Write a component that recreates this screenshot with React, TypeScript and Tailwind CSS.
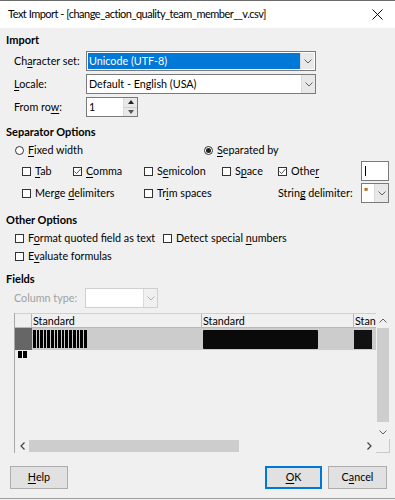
import React from "react";

const font = { fontFamily: 'Lato, "Noto Sans", "Liberation Sans", sans-serif' };

const Chevron = ({ up = false }: { up?: boolean }) => (
  <svg width="8" height="5" viewBox="0 0 8 5" className={up ? "rotate-180" : ""}>
    <path d="M0.5 0.5 L4 4 L7.5 0.5" fill="none" stroke="#606060" strokeWidth="1" />
  </svg>
);

const Side = ({ left = false }: { left?: boolean }) => (
  <svg width="5" height="8" viewBox="0 0 5 8" className={left ? "rotate-180" : ""}>
    <path d="M0.5 0.5 L4 4 L0.5 7.5" fill="none" stroke="#404040" strokeWidth="1.2" />
  </svg>
);

const Check = ({ checked = false, label, className = "" }: { checked?: boolean; label: React.ReactNode; className?: string }) => (
  <div className={`flex items-center gap-[4px] whitespace-nowrap ${className}`}>
    <div className="w-[9px] h-[9px] shrink-0 border border-[#333] bg-white flex items-center justify-center">
      {checked && (
        <svg width="7" height="7" viewBox="0 0 7 7">
          <path d="M0.5 3.5 L2.6 5.6 L6.5 1" fill="none" stroke="#444" strokeWidth="0.9" />
        </svg>
      )}
    </div>
    <span>{label}</span>
  </div>
);

const Radio = ({ on = false, label, className = "" }: { on?: boolean; label: React.ReactNode; className?: string }) => (
  <div className={`flex items-center gap-[4px] whitespace-nowrap ${className}`}>
    <div className="w-[9px] h-[9px] shrink-0 rounded-full border border-[#333] bg-white flex items-center justify-center">
      {on && <div className="w-[5px] h-[5px] rounded-full bg-[#222]" />}
    </div>
    <span>{label}</span>
  </div>
);

const U = ({ children }: { children: React.ReactNode }) => (
  <span className="underline decoration-1 underline-offset-2">{children}</span>
);

const DropBtn = () => (
  <div className="w-[14px] h-full shrink-0 bg-[#e8e8e8] border-l border-[#dadada] flex items-center justify-center">
    <Chevron />
  </div>
);

export default function App() {
  return (
    <div className="w-[395px] h-[500px] bg-[#f0f0f0] text-[10.75px] text-black flex flex-col overflow-hidden whitespace-nowrap" style={font}>
      {/* title bar */}
      <div className="h-[28px] bg-white border-t border-[#6b6b6b] flex items-center justify-between pl-[8px] pr-[12px] shrink-0">
        <span className="text-[11px] tracking-[-0.5px]">Text Import - [change_action_quality_team_member__v.csv]</span>
        <svg width="11" height="11" viewBox="0 0 11 11">
          <path d="M0.5 0.5 L10.5 10.5 M10.5 0.5 L0.5 10.5" stroke="#111" strokeWidth="1" />
        </svg>
      </div>

      <div className="flex flex-col px-[6px]">
        <div className="mt-[4px] h-[16px] leading-[16px] font-bold text-[11px]">Import</div>

        <div className="mt-[3px] flex flex-col gap-[3px] pl-[8px]">
          <div className="flex items-center h-[20px]">
            <span className="w-[72px]">Ch<U>a</U>racter set:</span>
            <div className="w-[230px] h-[20px] border border-[#7a7a7a] bg-white flex p-px">
              <div className="flex-1 bg-[#0078d7] text-white pl-[1px] leading-[16px]">Unicode (UTF-8)</div>
              <DropBtn />
            </div>
          </div>
          <div className="flex items-center h-[20px]">
            <span className="w-[72px]"><U>L</U>ocale:</span>
            <div className="w-[230px] h-[20px] border border-[#7a7a7a] bg-white flex">
              <div className="flex-1 pl-[2px] leading-[18px]">Default - English (USA)</div>
              <DropBtn />
            </div>
          </div>
          <div className="flex items-center h-[20px]">
            <span className="w-[72px]">From ro<U>w</U>:</span>
            <div className="w-[52px] h-[20px] border border-[#7a7a7a] bg-white flex">
              <div className="flex-1 pl-[2px] leading-[18px]">1</div>
              <div className="w-[14px] flex flex-col border-l border-[#dadada]">
                <div className="flex-1 bg-[#e8e8e8] border-b border-[#cfcfcf] flex items-center justify-center">
                  <svg width="6" height="4" viewBox="0 0 6 4"><path d="M0 4 L3 0 L6 4 Z" fill="#222" /></svg>
                </div>
                <div className="flex-1 bg-[#e8e8e8] flex items-center justify-center">
                  <svg width="6" height="4" viewBox="0 0 6 4"><path d="M0 0 L3 4 L6 0 Z" fill="#555" /></svg>
                </div>
              </div>
            </div>
          </div>
        </div>

        <div className="mt-[7px] h-[16px] leading-[16px] font-bold text-[11px]">Separator Options</div>
        <div className="mt-[2px] h-[16px] flex items-center pl-[9px]">
          <Radio label={<><U>F</U>ixed width</>} className="w-[189px]" />
          <Radio on label={<><U>S</U>eparated by</>} />
        </div>
        <div className="mt-[3px] h-[20px] flex items-center pl-[16px]">
          <Check label={<><U>T</U>ab</>} className="w-[51px]" />
          <Check checked label={<><U>C</U>omma</>} className="w-[71px]" />
          <Check label={<>S<U>e</U>micolon</>} className="w-[78px]" />
          <Check label={<>S<U>p</U>ace</>} className="w-[56px]" />
          <Check checked label={<>Othe<U>r</U></>} className="w-[83px]" />
          <div className="w-[28px] h-[20px] border border-[#7a7a7a] bg-white flex items-center pl-[3px]">
            <div className="w-px h-[10px] bg-black" />
          </div>
        </div>
        <div className="mt-[2px] h-[20px] flex items-center pl-[16px]">
          <Check label={<>Merge <U>d</U>elimiters</>} className="w-[122px]" />
          <Check label={<>Tr<U>i</U>m spaces</>} className="w-[134px]" />
          <span className="w-[83px]">Strin<U>g</U> delimiter:</span>
          <div className="w-[28px] h-[20px] border border-[#7a7a7a] bg-white flex">
            <div className="flex-1 pl-[2px] leading-[16px]">"</div>
            <DropBtn />
          </div>
        </div>

        <div className="mt-[9px] h-[16px] leading-[16px] font-bold text-[11px]">Other Options</div>
        <div className="mt-[2px] h-[16px] flex items-center pl-[9px]">
          <Check label={<>F<U>o</U>rmat quoted field as text</>} className="w-[148px]" />
          <Check label={<>Detect special <U>n</U>umbers</>} />
        </div>
        <div className="mt-[2px] h-[16px] flex items-center pl-[9px]">
          <Check label={<>E<U>v</U>aluate formulas</>} />
        </div>

        <div className="mt-[7px] h-[16px] leading-[16px] font-bold text-[11px]">Fields</div>
        <div className="mt-[1px] h-[20px] flex items-center pl-[8px]">
          <span className="w-[71px] text-[#a0a0a0]">Column type:</span>
          <div className="w-[73px] h-[20px] border border-[#cfcfcf] bg-white flex">
            <div className="flex-1" />
            <div className="w-[14px] h-full bg-[#f0f0f0] border-l border-[#dadada] flex items-center justify-center">
              <svg width="8" height="5" viewBox="0 0 8 5"><path d="M0.5 0.5 L4 4 L7.5 0.5" fill="none" stroke="#b0b0b0" strokeWidth="1" /></svg>
            </div>
          </div>
        </div>

        {/* table */}
        <div className="mt-[5px] ml-[8px] w-[376px] h-[140px] border-l border-[#a8a8a8] flex flex-col">
          <div className="flex flex-1 min-h-0">
            <div className="flex-1 flex flex-col min-w-0">
              <div className="h-[15px] flex border-t border-[#d0d0d0] leading-[14px] shrink-0">
                <div className="w-[17px] border-r border-b border-[#b8b8b8]" />
                <div className="w-[170px] border-r border-b border-[#b8b8b8] pl-[1px]">Standard</div>
                <div className="w-[152px] border-r border-b border-[#b8b8b8] pl-[1px]">Standard</div>
                <div className="flex-1 border-b border-[#b8b8b8] pl-[1px] overflow-hidden">Stan</div>
              </div>
              <div className="h-[22px] flex bg-[#cccccc] shrink-0">
                <div className="w-[17px] bg-[#666]" />
                <div className="w-[170px] flex items-center pl-[1px] gap-[1px]">
                  {[3, 2, 3, 2, 3, 3, 2, 3, 2, 3, 3, 3, 2, 3, 3].map((w, i) => (
                    <div key={i} className="h-[18px] bg-black" style={{ width: w }} />
                  ))}
                </div>
                <div className="w-[152px] flex items-center pl-[1px]">
                  <div className="w-[115px] h-[19px] bg-[#0a0a0a] rounded-[1px]" />
                </div>
                <div className="flex-1 flex items-center">
                  <div className="w-[18px] h-[19px] bg-[#111]" />
                </div>
              </div>
              <div className="flex pl-[3px] pt-px gap-px">
                <div className="w-[4px] h-[7px] bg-black" />
                <div className="w-[4px] h-[7px] bg-black" />
              </div>
            </div>
            {/* vertical scrollbar */}
            <div className="w-[14px] flex flex-col">
              <div className="h-[15px] flex items-center justify-center"><Chevron up /></div>
              <div className="h-[94px] bg-[#cdcdcd] mx-[1px]" />
              <div className="flex-1 bg-[#f0f0f0]" />
              <div className="h-[14px] flex items-center justify-center"><Chevron /></div>
            </div>
          </div>
          {/* horizontal scrollbar */}
          <div className="h-[14px] flex items-center shrink-0">
            <div className="w-[14px] flex items-center justify-center"><Side left /></div>
            <div className="w-[210px] h-[12px] bg-[#cdcdcd]" />
            <div className="flex-1" />
            <div className="w-[14px] flex items-center justify-center"><Side /></div>
            <div className="w-[14px] h-[14px] border-b border-r border-[#c8c8c8]" />
          </div>
        </div>

        {/* buttons */}
        <div className="mt-[13px] flex items-center pl-[4px] pr-[2px]">
          <button className="w-[58px] h-[23px] bg-[#e1e1e1] border border-[#adadad] leading-none"><U>H</U>elp</button>
          <div className="flex-1" />
          <button className="w-[57px] h-[23px] bg-[#e1e1e1] border-2 border-[#0078d7] leading-none"><U>O</U>K</button>
          <button className="ml-[6px] w-[59px] h-[23px] bg-[#e1e1e1] border border-[#adadad] leading-none">C<U>a</U>ncel</button>
        </div>
      </div>
      <div className="flex-1" />
      <div className="h-px bg-[#a0a0a0] mb-[1px]" />
    </div>
  );
}
